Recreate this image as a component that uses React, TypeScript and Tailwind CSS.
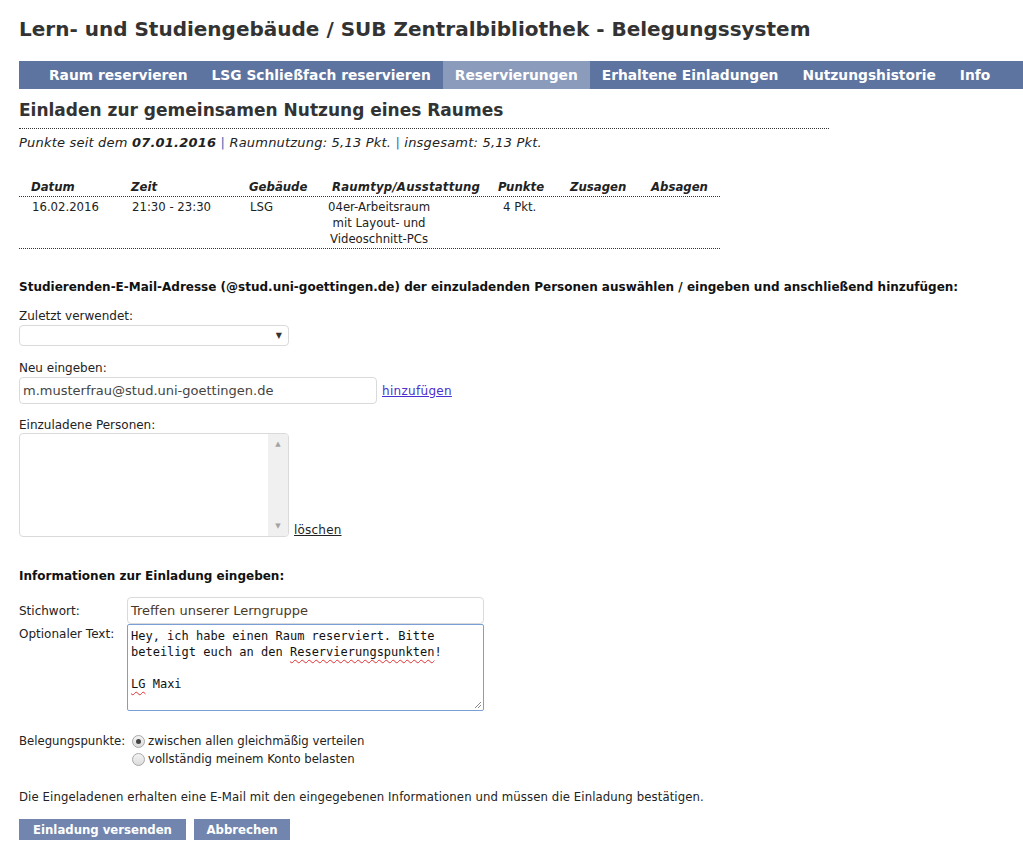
import React from "react"

const verdana = "font-['DejaVu_Sans',Verdana,sans-serif]"
const tahoma = "font-['DejaVu_Sans_Condensed','DejaVu_Sans',Tahoma,sans-serif] font-stretch-condensed"
const mono = "font-['DejaVu_Sans_Mono','Liberation_Mono',monospace]"

const navItems = [
  { label: "Raum reservieren", active: false },
  { label: "LSG Schließfach reservieren", active: false },
  { label: "Reservierungen", active: true },
  { label: "Erhaltene Einladungen", active: false },
  { label: "Nutzungshistorie", active: false },
  { label: "Info", active: false },
]

const columns = [
  { label: "Datum", cls: "pl-3" },
  { label: "Zeit", cls: "pl-3" },
  { label: "Gebäude", cls: "pl-3" },
  { label: "Raumtyp/Ausstattung", cls: "pl-3 tracking-[0.2px]" },
  { label: "Punkte", cls: "pl-[5px]" },
  { label: "Zusagen", cls: "pl-3" },
  { label: "Absagen", cls: "pl-3" },
]

const Radio = ({ checked }: { checked?: boolean }) => (
  <span className="flex h-[13px] w-[13px] shrink-0 items-center justify-center rounded-full border border-[#a8a8a8] bg-gradient-to-b from-[#f4f4f4] to-[#dcdcdc]">
    {checked && <span className="h-[5px] w-[5px] rounded-full bg-[#444]" />}
  </span>
)

const Typo = ({ children }: { children: React.ReactNode }) => (
  <span className="underline decoration-wavy decoration-[#e03030] decoration-1 underline-offset-[3px]">{children}</span>
)

export default function App() {
  return (
    <div className={`min-h-[847px] overflow-hidden bg-white pl-[19px] text-[#222] ${verdana}`}>
      <h1 className="pt-[15px] text-[20px] font-bold leading-[28px] text-[#333]">
        Lern- und Studiengebäude / SUB Zentralbibliothek - Belegungssystem
      </h1>

      <nav className="mt-[18px] flex h-[28px] items-stretch whitespace-nowrap bg-[#5d73a0] pl-[18px] text-[13.8px] font-bold text-white">
        {navItems.map((item) => (
          <a
            key={item.label}
            href="#"
            className={`flex items-center px-[12px] ${item.active ? "bg-[#8a9bbb]" : ""}`}
          >
            {item.label}
          </a>
        ))}
      </nav>

      <div className="w-[810px]">
        <h2 className="mt-[9px] border-b border-dotted border-[#333] pb-[6px] text-[17px] font-bold leading-[24px] text-[#333]">
          Einladen zur gemeinsamen Nutzung eines Raumes
        </h2>
        <p className="mt-[5px] text-[13px] italic leading-[18px] tracking-[0.2px]">
          Punkte seit dem <b>07.01.2016</b> <span className="text-[#3a6ab0]">|</span> Raumnutzung: 5,13 Pkt.{" "}
          <span className="text-[#3a6ab0]">|</span> insgesamt: 5,13 Pkt.
        </p>
      </div>

      {/* Reservierung */}
      <div className={`mt-[25px] w-[701px] text-[13px] ${tahoma}`}>
        <div className="grid grid-cols-[100px_118px_83px_173px_65px_81px_81px] border-b border-dotted border-[#333] pt-[1px] font-bold italic leading-[18px] text-[#222]">
          {columns.map((col) => (
            <div key={col.label} className={col.cls}>
              {col.label}
            </div>
          ))}
        </div>
        <div className="grid grid-cols-[100px_118px_83px_173px_65px_81px_81px] border-b border-dotted border-[#333] pt-[2px] pb-[1px] leading-[16px]">
          <div className="pl-[13px]">16.02.2016</div>
          <div className="pl-[13px]">21:30 - 23:30</div>
          <div className="pl-[13px]">LSG</div>
          <div className="pl-2">
            <span className="inline-block text-center">
              04er-Arbeitsraum
              <br />
              mit Layout- und
              <br />
              Videoschnitt-PCs
            </span>
          </div>
          <div className="pl-[10px]">4 Pkt.</div>
          <div />
          <div />
        </div>
      </div>

      <p className="mt-[29px] text-[12px] font-bold leading-[18px] text-[#111]">
        Studierenden-E-Mail-Adresse (@stud.uni-goettingen.de) der einzuladenden Personen auswählen / eingeben und
        anschließend hinzufügen:
      </p>

      <label className="mt-[12px] block text-[12px] leading-[17px]">Zuletzt verwendet:</label>
      <div className="flex h-[21px] w-[270px] items-center justify-end rounded-[4px] border border-[#dadada] bg-white pr-[6px]">
        <span className="text-[8px] text-[#333]">▼</span>
      </div>

      <label className="mt-[13px] block text-[12px] leading-[18px]">Neu eingeben:</label>
      <div className="flex items-center gap-[5px]">
        <div className="flex h-[27px] w-[358px] items-center rounded-[4px] border border-[#dadada] pl-[3px] text-[13px] text-[#444]">
          m.musterfrau@stud.uni-goettingen.de
        </div>
        <a href="#" className="text-[12px] tracking-[0.3px] text-[#4a2fd0] underline">
          hinzufügen
        </a>
      </div>

      <label className="mt-[13px] block text-[12px] leading-[16px]">Einzuladene Personen:</label>
      <div className="flex items-end gap-[5px]">
        <div className="flex h-[104px] w-[270px] justify-end overflow-hidden rounded-[4px] border border-[#dadada]">
          <div className="flex w-[20px] flex-col items-center justify-between bg-[#f0f0f0] py-[5px] text-[7px] text-[#a3a3a3]">
            <span>▲</span>
            <span>▼</span>
          </div>
        </div>
        <a href="#" className="-mb-[2px] text-[12px] tracking-[0.2px] text-[#222] underline">
          löschen
        </a>
      </div>

      <p className="mt-[30px] text-[12px] font-bold leading-[18px] text-[#111]">Informationen zur Einladung eingeben:</p>

      <div className="mt-[12px] grid w-[465px] grid-cols-[108px_1fr] text-[12px]">
        <div className="flex items-center leading-[18px]">Stichwort:</div>
        <div className="flex h-[27px] items-center rounded-[4px] border border-[#dadada] pl-[3px] text-[13px] text-[#4a3a2a]">
          Treffen unserer Lerngruppe
        </div>
        <div className="pt-[1px] leading-[18px]">Optionaler Text:</div>
        <div className={`relative h-[87px] rounded-[2px] border border-[#7a9fd6] px-[3px] py-[3px] text-[12px] leading-[16px] text-[#111] ${mono}`}>
          <div>Hey, ich habe einen Raum reserviert. Bitte</div>
          <div>
            beteiligt euch an den <Typo>Reservierungspunkten</Typo>!
          </div>
          <div>&nbsp;</div>
          <div>
            <Typo>LG</Typo> Maxi
          </div>
          <svg className="absolute right-[1px] bottom-[1px]" width="8" height="8" viewBox="0 0 8 8">
            <path d="M7 1L1 7M7 4L4 7" stroke="#8a8a8a" strokeWidth="1" />
          </svg>
        </div>
      </div>

      <div className={`mt-[21px] flex text-[13px] leading-[18px] ${tahoma}`}>
        <span className="w-[113px]">Belegungspunkte:</span>
        <div className="flex flex-col">
          <label className="flex items-center gap-[3px]">
            <Radio checked />
            zwischen allen gleichmäßig verteilen
          </label>
          <label className="flex items-center gap-[3px]">
            <Radio />
            vollständig meinem Konto belasten
          </label>
        </div>
      </div>

      <p className={`mt-[20px] text-[13px] leading-[18px] tracking-[0.1px] ${tahoma}`}>
        Die Eingeladenen erhalten eine E-Mail mit den eingegebenen Informationen und müssen die Einladung bestätigen.
      </p>

      <div className={`mt-[13px] flex gap-[8px] text-[13px] font-bold text-white ${tahoma}`}>
        <button className="h-[21px] w-[167px] bg-[#7185ae]">Einladung versenden</button>
        <button className="h-[21px] w-[96px] bg-[#7185ae]">Abbrechen</button>
      </div>
    </div>
  )
}
